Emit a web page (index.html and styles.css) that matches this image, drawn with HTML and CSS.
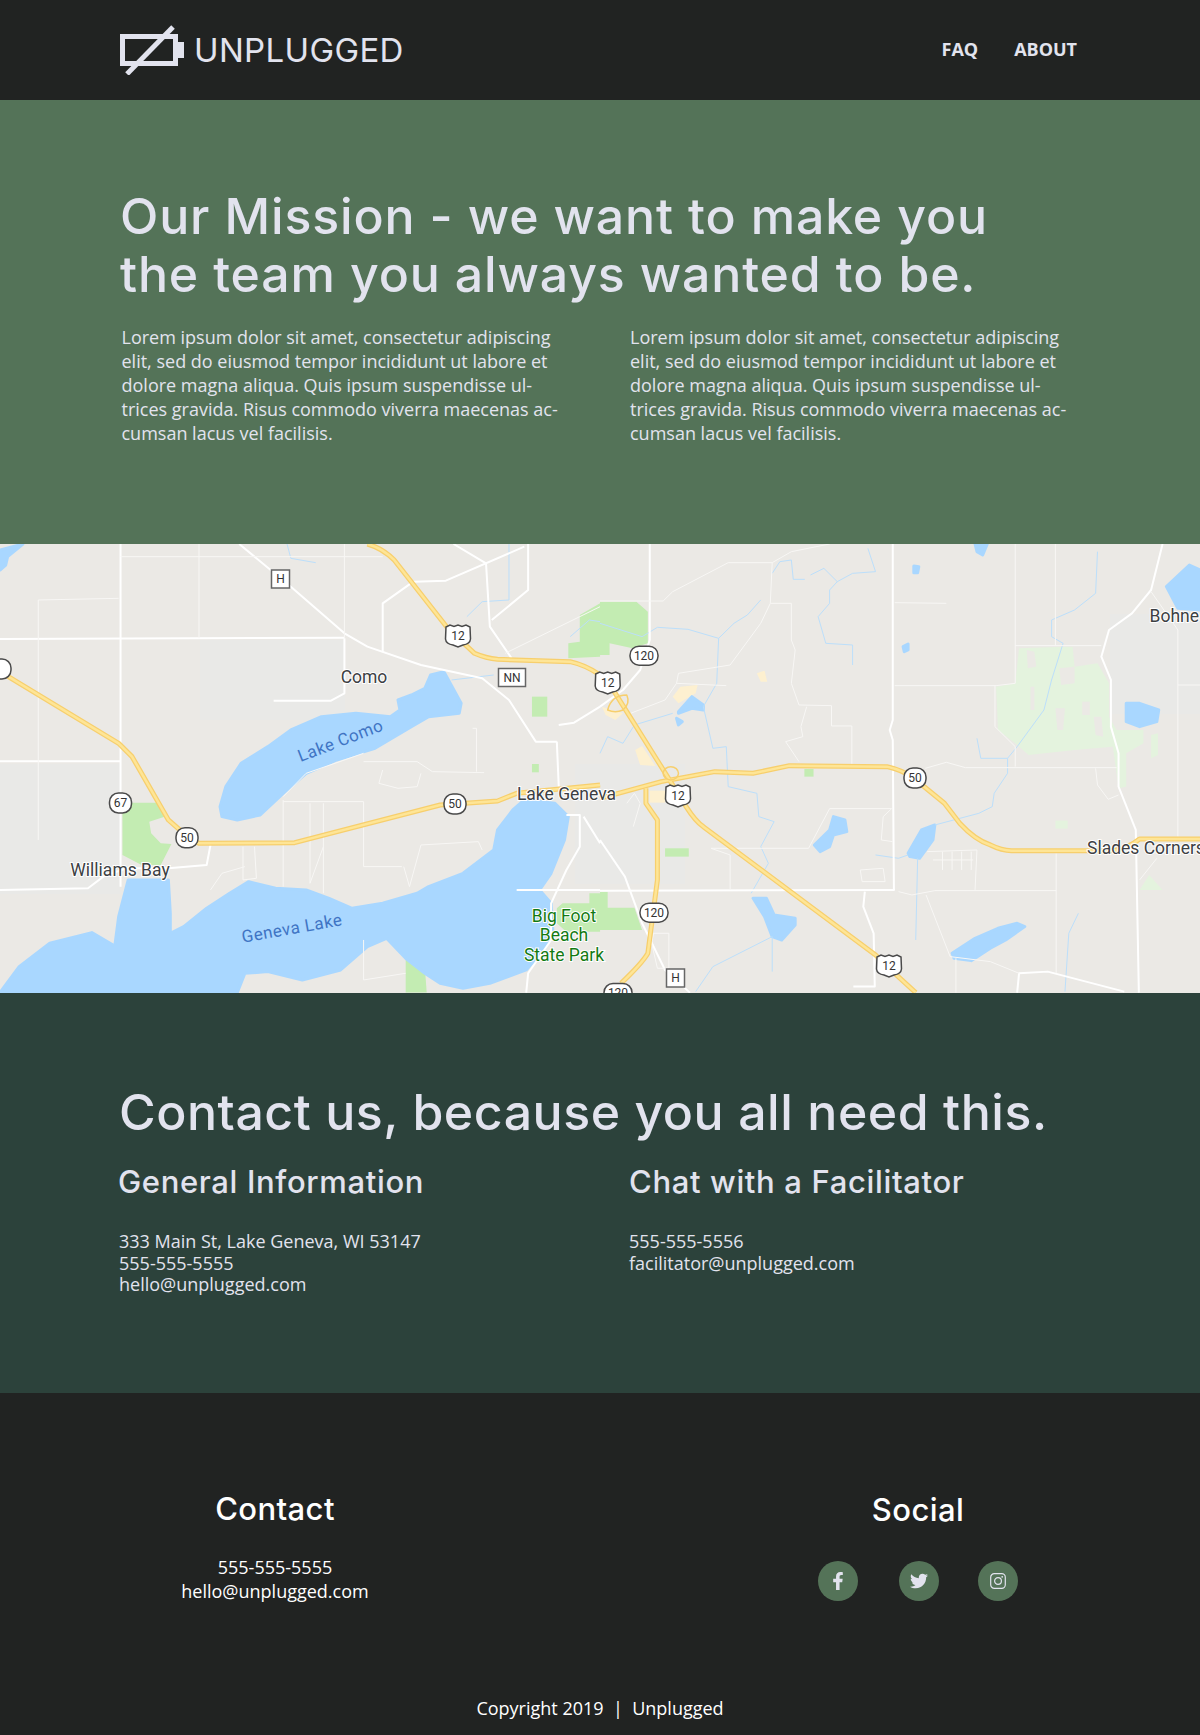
FILE: index.html
```html
<!DOCTYPE html>
<html lang="en">
<head>
    <meta charset="UTF-8">
    <meta name="viewport" content="width=device-width, initial-scale=1.0">
    <title>Unplugged</title>
    <link rel="stylesheet" href="styles.css">
</head>
<body>
    <header class="site-header">
        <a class="logo" href="#">
            <svg class="logo-icon" viewBox="0 0 66 50" width="66" height="50">
                <rect x="2.5" y="11.5" width="53" height="27" fill="none" stroke="#e2e3ee" stroke-width="5"/>
                <rect x="58" y="17" width="6" height="16" fill="#e2e3ee"/>
                <path d="M53 2 L7 49" fill="none" stroke="#e2e3ee" stroke-width="5"/>
            </svg>
            <span class="logo-text">UNPLUGGED</span>
        </a>
        <nav class="site-nav">
            <a href="#">FAQ</a>
            <a href="#">ABOUT</a>
        </nav>
    </header>

    <section class="mission">
        <h1>Our Mission - we want to make you<br>the team you always wanted to be.</h1>
        <div class="two-col">
            <p>Lorem ipsum dolor sit amet, consectetur adipiscing<br>elit, sed do eiusmod tempor incididunt ut labore et<br>dolore magna aliqua. Quis ipsum suspendisse ul-<br>trices gravida. Risus commodo viverra maecenas ac-<br>cumsan lacus vel facilisis.</p>
            <p>Lorem ipsum dolor sit amet, consectetur adipiscing<br>elit, sed do eiusmod tempor incididunt ut labore et<br>dolore magna aliqua. Quis ipsum suspendisse ul-<br>trices gravida. Risus commodo viverra maecenas ac-<br>cumsan lacus vel facilisis.</p>
        </div>
    </section>

    <div class="map">
        <svg viewBox="0 0 1200 449" width="1200" height="449">
            <defs>
                <g id="hwy-left">
                    <path d="M0 395 L310 610 L345 650 L440 840 L490 890 L520 910 L770 908 L1150 795 L1300 783 L1350 760 L1568 735"/>
                    <path d="M960 12 Q1000 25 1030 60 L1170 265 L1240 340 Q1270 355 1300 358 L1490 365 Q1530 375 1568 405"/>
                </g>
                <g id="hwy-right">
                    <path d="M0 775 L160 725 L300 695 L400 700 L495 677 L750 680 Q790 690 820 715 L900 790 L940 850 Q980 900 1020 915 Q1050 932 1075 932 L1340 932 Q1380 925 1410 897 L1568 897"/>
                    <path d="M0 400 L40 460 L160 680 L225 800 Q250 845 270 860 L720 1245 L760 1290 L825 1358"/>
                    <path d="M120 745 L120 790 L150 840 L150 1020 L125 1240 Q110 1270 55 1330"/>
                </g>
                <g id="badge-round">
                    <rect x="-11" y="-10" width="22" height="20" rx="9" class="badge-box"/>
                </g>
                <g id="badge-wide">
                    <rect x="-14" y="-9.5" width="28" height="19" rx="9" class="badge-box"/>
                </g>
                <g id="badge-shield">
                    <path class="badge-box" d="M-12 -9 L-8 -11 L-4 -9.5 L0 -11 L4 -9.5 L8 -11 L12 -9 L12.5 3 Q12 8 5 9 L0 11 L-5 9 Q-12 8 -12.5 3 Z"/>
                </g>
            </defs>

            <rect class="land" width="1200" height="449"/>
            <rect class="urban" x="0" y="220" width="120" height="130"/>
            <rect class="urban" x="200" y="96" width="145" height="80"/>
            <rect class="urban" x="1110" y="70" width="90" height="100"/>
            <rect class="urban" x="575" y="220" width="110" height="120"/>

            <g transform="translate(0,-4) scale(.3827,.3333)">
                <path class="park" d="M320 788 L420 788 L430 830 L390 845 L395 880 L420 910 L448 912 L420 975 L370 975 L320 945 Z"/>
                <path class="park" d="M1455 1105 L1470 1090 L1540 1090 L1540 1060 L1568 1060 L1568 1175 L1480 1175 L1455 1150 Z"/>
                <path class="park" d="M1568 190 L1515 225 L1515 305 L1485 310 L1485 355 L1568 350 Z"/>
                <path class="park" d="M1060 1255 L1110 1280 L1115 1358 L1060 1358 Z"/>
                <path class="park" d="M1390 470 L1430 470 L1430 530 L1390 530 Z"/>
                <path class="park" d="M1390 672 L1408 672 L1408 697 L1390 697 Z"/>

                <path class="water" d="M0 1358 L50 1280 L130 1210 L240 1178 L300 1218 L310 1130 L335 1020 L440 1020 L445 1120 L445 1180 L480 1160 L540 1105 L600 1060 L650 1025 L720 1045 L800 1050 L860 1075 L920 1105 L1000 1090 L1090 1060 L1120 1040 L1210 1000 L1290 930 L1300 870 L1340 810 L1370 780 L1450 790 L1485 830 L1475 900 L1440 1000 L1410 1050 L1440 1090 L1445 1180 L1420 1230 L1375 1290 L1280 1330 L1210 1345 L1150 1330 L1110 1300 L1060 1255 L1010 1195 L960 1220 L890 1290 L790 1320 L700 1295 L640 1300 L620 1358 Z"/>
                <path class="water" d="M575 800 L590 740 L630 670 L700 620 L760 570 L840 530 L930 520 L1020 530 L1045 510 L1040 480 L1075 465 L1110 445 L1125 405 L1160 395 L1205 490 L1200 520 L1120 530 L1075 560 L980 625 L880 660 L800 700 L740 760 L680 825 L620 840 L580 830 Z"/>
                <path class="water" d="M0 30 L60 12 L20 50 L15 75 L0 90 Z"/>

                <path class="river" d="M750 12 L760 55 L825 68"/>
                <path class="river" d="M1180 420 L1290 405"/>
                <path class="river" d="M1220 230 L1260 185 L1330 180 L1330 12"/>
                <path class="river" d="M1490 290 L1540 240 L1568 245"/>

                <path class="road" d="M315 12 L315 1040"/>
                <path class="road" d="M0 297 L900 293"/>
                <path class="road" d="M625 12 L760 140 L900 280 L960 320 L1100 375 L1260 415 L1330 480 L1400 605 L1455 605"/>
                <path class="road" d="M0 1050 L230 1045 L270 1010 L330 985 L440 985 L540 975 L550 915"/>
                <path class="road" d="M0 664 L315 664"/>
                <path class="road" d="M900 295 L900 460 L865 482 L715 482"/>
                <path class="road" d="M1000 335 L1000 190 L1080 125 L1165 122 L1370 20"/>
                <path class="road" d="M1185 12 L1270 70 L1280 260 L1340 360"/>
                <path class="road" d="M1380 12 L1380 150 L1285 240"/>
                <path class="road" d="M1455 605 L1460 740"/>
                <path class="road" d="M1460 555 L1500 548 L1568 500"/>
                <path class="road" d="M1480 825 L1515 825 L1515 920 L1480 990 L1440 1090 L1440 1200 L1380 1300 L1375 1358"/>
                <path class="road" d="M1525 830 L1568 910"/>
                <path class="road" d="M1350 1050 L1568 1050"/>

                <path class="road-thin" d="M100 180 L310 175"/>
                <path class="road-thin" d="M100 180 L100 900"/>
                <path class="road-thin" d="M315 50 L1000 50"/>
                <path class="road-thin" d="M520 12 L520 295"/>
                <path class="road-thin" d="M900 12 L900 295"/>
                <path class="road-thin" d="M1320 340 L1568 200"/>
                <path class="road-thin" d="M740 780 L740 1040"/>
                <path class="road-thin" d="M740 785 L950 785 L950 980 L1050 980"/>
                <path class="road-thin" d="M950 640 L800 700 L740 770"/>
                <path class="road-thin" d="M950 665 L1090 665 L1130 695 L1265 698"/>
                <path class="road-thin" d="M1000 690 L990 730 L1040 745 L1090 740 L1100 700"/>
                <path class="road-thin" d="M845 790 L845 1060"/>
                <path class="road-thin" d="M810 790 L810 1030 L845 920"/>
                <path class="road-thin" d="M1055 980 L1070 1040 L1100 915 L1250 905 L1260 930"/>
                <path class="road-thin" d="M635 920 L635 1020 L670 1015 L665 920"/>
                <path class="road-thin" d="M550 1050 L580 1000 L640 980"/>
                <path class="road-thin" d="M1235 565 L1245 565 L1245 695"/>
                <path class="road-thin" d="M950 1200 L950 1320 L1060 1300"/>

                <use href="#hwy-left" class="hwy-out"/>
                <use href="#hwy-left" class="hwy-in"/>
            </g>

            <g transform="translate(600,-4) scale(.3827,.3333)">
                <path class="forest" d="M1095 325 L1210 320 L1235 320 L1240 380 L1300 370 L1330 430 L1330 530 L1350 570 L1420 570 L1420 610 L1375 640 L1375 740 L1355 745 L1340 620 L1240 630 L1120 645 L1085 610 L1040 570 L1035 440 L1085 430 Z"/>
                <path class="forest" d="M1440 585 L1458 580 L1458 645 L1440 655 Z"/>
                <path class="forest" d="M1410 1050 L1435 1005 L1470 1050 Z"/>
                <path class="land" d="M1115 330 L1135 335 L1140 380 L1118 385 Z"/>
                <path class="land" d="M1200 385 L1240 380 L1240 430 L1205 435 Z"/>
                <path class="land" d="M1125 440 L1135 440 L1135 510 L1125 510 Z"/>
                <path class="land" d="M1190 505 L1215 505 L1210 570 L1195 570 Z"/>
                <path class="land" d="M1260 485 L1280 485 L1280 525 L1260 525 Z"/>
                <path class="land" d="M1290 530 L1310 530 L1315 590 L1295 585 Z"/>
                <path class="park" d="M0 185 L95 185 L125 215 L125 310 L85 325 L25 310 L25 345 L0 345 Z"/>
                <path class="park" d="M0 1055 L20 1055 L20 1103 L90 1103 L110 1170 L0 1170 Z"/>
                <path class="park" d="M170 925 L232 925 L232 950 L170 950 Z"/>
                <path class="park" d="M534 687 L558 687 L558 710 L534 710 Z"/>
                <path class="forest" d="M1190 842 L1222 842 L1222 866 L1190 866 Z"/>

                <path class="sand" d="M190 470 L210 440 L255 435 L250 460 L205 490 Z"/>
                <path class="sand" d="M410 400 L430 392 L437 425 L420 425 Z"/>
                <path class="sand" d="M92 630 L110 618 L145 678 L105 675 Z"/>
                <path class="sand" d="M5 500 L30 510 L60 520 L40 540 L15 525 Z"/>
                <path class="sand" d="M130 752 L170 752 L170 788 L130 788 Z"/>

                <path class="water" d="M1540 75 L1480 140 L1510 205 L1568 210 L1568 90 Z"/>
                <path class="water" d="M1375 490 L1410 490 L1460 510 L1455 545 L1410 560 L1375 545 Z"/>
                <path class="water" d="M805 940 L840 870 L875 855 L870 900 L835 955 L810 950 Z"/>
                <path class="water" d="M560 915 L600 870 L610 830 L640 840 L645 875 L610 885 L600 920 L575 935 Z"/>
                <path class="water" d="M400 1075 L435 1075 L455 1125 L510 1135 L510 1155 L475 1200 L450 1190 L430 1130 Z"/>
                <path class="water" d="M920 1240 L980 1195 L1040 1165 L1090 1150 L1110 1160 L1060 1200 L1020 1225 L970 1262 L925 1255 Z"/>
                <path class="water" d="M205 515 L240 470 L270 495 L270 510 L240 505 L205 520 Z"/>
                <path class="water" d="M980 12 L1012 12 L1000 45 L985 35 Z"/>
                <path class="water" d="M820 78 L833 80 L830 98 L820 98 Z"/>
                <path class="water" d="M792 320 L805 312 L805 330 L795 335 Z"/>
                <path class="water" d="M200 535 L215 545 L205 555 Z"/>

                <path class="river" d="M0 250 L110 290 L150 262 L230 268 L310 295 L305 430 L270 500 L295 625 L330 620 L335 740 L410 760 L415 830 L455 845 L420 920 L440 970 L395 1060"/>
                <path class="river" d="M310 295 L350 250 L385 225 L420 180"/>
                <path class="river" d="M450 100 L470 65 L500 60 L505 118 L535 118"/>
                <path class="river" d="M550 105 L585 85 L620 125 L660 100 L720 95 L700 25"/>
                <path class="river" d="M620 125 L600 150 L600 190 L570 230 L590 310 L660 315 L660 375"/>
                <path class="river" d="M1300 35 L1295 160 L1240 210 L1180 240 L1180 290 L1210 310 L1180 420 L1160 510 L1090 620 L1065 655 L995 655 L985 595"/>
                <path class="river" d="M1065 655 L1065 700 L1030 760 L1025 800 L990 820 L875 855"/>
                <path class="river" d="M720 945 L780 955 L805 945"/>
                <path class="river" d="M830 955 L825 1200"/>
                <path class="river" d="M450 1190 L295 1280 L250 1355"/>
                <path class="river" d="M450 1190 L450 1295"/>
                <path class="river" d="M1250 1120 L1225 1180 L1215 1355"/>
                <path class="river" d="M0 640 L20 590 L60 610 L90 555 L190 520"/>

                <path class="road" d="M130 12 L130 300 L105 390 L60 450 L0 500"/>
                <path class="road" d="M765 12 L765 540 L757 570 L765 600 L768 1050"/>
                <path class="road" d="M0 1052 L770 1050"/>
                <path class="road" d="M1470 12 L1440 150 L1390 220 L1330 270 L1310 350 L1335 420 L1335 560 L1355 640 L1355 740 L1400 870 L1408 1358"/>
                <path class="road" d="M0 900 L65 1010 L110 1150 L170 1290 L235 1358"/>
                <path class="road" d="M692 1055 L688 1100 L715 1180 L718 1340 L662 1340"/>
                <path class="road" d="M1090 1358 L1095 1300 L1170 1295 L1370 1355"/>

                <path class="road-thin" d="M0 183 L165 183 L190 155 L335 68 L450 68 L500 35 L600 12"/>
                <path class="road-thin" d="M445 190 L500 190 L500 300 L510 330 L500 430 L520 495 L605 497 L605 558 L658 558 L658 680"/>
                <path class="road-thin" d="M445 190 L420 250 L340 375 L205 400 L200 430 L330 437"/>
                <path class="road-thin" d="M450 68 L445 190"/>
                <path class="road-thin" d="M200 430 L170 480 L80 520"/>
                <path class="road-thin" d="M540 500 L525 560 L530 590 L485 605 L520 665"/>
                <path class="road-thin" d="M770 188 L905 190"/>
                <path class="road-thin" d="M770 437 L1035 437 L1085 430 L1085 12"/>
                <path class="road-thin" d="M1085 317 L1310 317"/>
                <path class="road-thin" d="M1190 12 L1190 317"/>
                <path class="road-thin" d="M1032 437 L1032 560 L1085 620 L1085 680"/>
                <path class="road-thin" d="M850 685 L905 667 L955 683 L1350 683"/>
                <path class="road-thin" d="M1295 685 L1300 735 L1328 778 L1355 765"/>
                <path class="road-thin" d="M600 806 L762 806 L740 830 L735 900 L765 905"/>
                <path class="road-thin" d="M600 806 L545 925 L290 925 L340 945 L340 1050"/>
                <path class="road-thin" d="M680 990 L740 985 L745 1025 L685 1025 Z"/>
                <path class="road-thin" d="M855 935 L985 930 L980 1050"/>
                <path class="road-thin" d="M870 960 L975 960"/>
                <path class="road-thin" d="M895 935 L895 990 M920 935 L920 990 M945 935 L945 990 M970 935 L970 990"/>
                <path class="road-thin" d="M780 1055 L815 1065 L875 1052 L1192 1052"/>
                <path class="road-thin" d="M1192 940 L1192 1300"/>
                <path class="road-thin" d="M852 1065 L915 1250 L1020 1265 L1095 1300"/>
                <path class="road-thin" d="M930 1255 L930 1358"/>
                <path class="road-thin" d="M1410 1020 L1455 955"/>
                <path class="road-thin" d="M1510 270 L1510 890"/>
                <path class="road-thin" d="M1440 155 L1510 270"/>
                <path class="road-thin" d="M1510 435 L1568 435"/>
                <path class="road-thin" d="M140 1180 L180 1180 L180 1285 L150 1285 L135 1210 Z"/>
                <path class="road-thin" d="M70 790 L90 760 L105 790 L87 860"/>

                <use href="#hwy-right" class="hwy-out"/>
                <use href="#hwy-right" class="hwy-in"/>
                <circle class="ramp" cx="185" cy="700" r="20"/>
                <path class="ramp" d="M20 510 Q30 465 70 465 Q80 490 60 510 Q40 520 20 510 Z"/>
            </g>

            <use href="#badge-round" x="0" y="125"/>
            <use href="#badge-round" x="120.5" y="259"/>
            <use href="#badge-round" x="187" y="293.7"/>
            <use href="#badge-round" x="455" y="260"/>
            <use href="#badge-round" x="915" y="234"/>
            <use href="#badge-wide" x="644" y="111.7"/>
            <use href="#badge-wide" x="654" y="368.7"/>
            <use href="#badge-wide" x="618" y="449"/>
            <use href="#badge-shield" x="458" y="92"/>
            <use href="#badge-shield" x="607.7" y="139"/>
            <use href="#badge-shield" x="678" y="252"/>
            <use href="#badge-shield" x="889" y="422"/>
            <rect class="badge-square" x="271.5" y="26" width="18" height="18"/>
            <rect class="badge-square" x="498.5" y="124.5" width="27" height="18"/>
            <rect class="badge-square" x="666.5" y="425" width="18" height="18"/>

            <g class="badge-text">
                <text x="120.5" y="263">67</text>
                <text x="187" y="298">50</text>
                <text x="455" y="264">50</text>
                <text x="915" y="238">50</text>
                <text x="644" y="116">120</text>
                <text x="654" y="373">120</text>
                <text x="618" y="453">120</text>
                <text x="458" y="96">12</text>
                <text x="607.7" y="143">12</text>
                <text x="678" y="256">12</text>
                <text x="889" y="426">12</text>
                <text x="280.5" y="39">H</text>
                <text x="512" y="137.5">NN</text>
                <text x="675.5" y="438">H</text>
            </g>

            <g class="label-place">
                <text x="364" y="139">Como</text>
                <text x="120" y="332">Williams Bay</text>
                <text x="566.5" y="256">Lake Geneva</text>
                <text class="start" x="1087" y="310">Slades Corners</text>
                <text class="start" x="1149.5" y="78">Bohne</text>
            </g>
            <g class="label-water">
                <text transform="translate(342.5,202) rotate(-21)">Lake Como</text>
                <text transform="translate(293,390) rotate(-10)">Geneva Lake</text>
            </g>
            <g class="label-park">
                <text x="564" y="378">Big Foot</text>
                <text x="564" y="397">Beach</text>
                <text x="564" y="417">State Park</text>
            </g>
        </svg>
    </div>

    <section class="contact">
        <h2>Contact us, because you all need this.</h2>
        <div class="contact-cols">
            <div class="contact-general">
                <h3>General Information</h3>
                <p>333 Main St, Lake Geneva, WI 53147<br>555-555-5555<br>hello@unplugged.com</p>
            </div>
            <div>
                <h3>Chat with a Facilitator</h3>
                <p>555-555-5556<br>facilitator@unplugged.com</p>
            </div>
        </div>
    </section>

    <footer class="site-footer">
        <div class="footer-cols">
            <div class="footer-contact">
                <h4>Contact</h4>
                <p>555-555-5555<br>hello@unplugged.com</p>
            </div>
            <div class="footer-social">
                <h4>Social</h4>
                <div class="social-links">
                    <a href="#">
                        <svg viewBox="0 0 320 512" width="12" height="18"><path d="M279.14 288l14.22-92.66h-88.91v-60.13c0-25.35 12.42-50.06 52.24-50.06h40.42V6.26S260.43 0 225.36 0c-73.22 0-121.08 44.38-121.08 124.72v70.62H22.89V288h81.39v224h100.17V288z"/></svg>
                    </a>
                    <a href="#">
                        <svg viewBox="0 0 512 512" width="18" height="18"><path d="M459.37 151.716c.325 4.548.325 9.097.325 13.645 0 138.72-105.583 298.558-298.558 298.558-59.452 0-114.68-17.219-161.137-47.106 8.447.974 16.568 1.299 25.34 1.299 49.055 0 94.213-16.568 130.274-44.832-46.132-.975-84.792-31.188-98.112-72.772 6.498.974 12.995 1.624 19.818 1.624 9.421 0 18.843-1.3 27.614-3.573-48.081-9.747-84.143-51.98-84.143-102.985v-1.299c13.969 7.797 30.214 12.67 47.431 13.319-28.264-18.843-46.781-51.005-46.781-87.391 0-19.492 5.197-37.36 14.294-52.954 51.655 63.675 129.3 105.258 216.365 109.807-1.624-7.797-2.599-15.918-2.599-24.04 0-57.828 46.782-104.934 104.934-104.934 30.213 0 57.502 12.67 76.67 33.137 23.715-4.548 46.456-13.32 66.599-25.34-7.798 24.366-24.366 44.833-46.132 57.827 21.117-2.273 41.584-8.122 60.426-16.243-14.292 20.791-32.161 39.308-52.628 54.253z"/></svg>
                    </a>
                    <a href="#">
                        <svg class="insta" viewBox="0 0 16 16" width="16" height="16"><rect x=".7" y=".7" width="14.6" height="14.6" rx="3.6"/><circle cx="8" cy="8" r="3.4"/><circle class="dot" cx="12.2" cy="3.8" r=".9"/></svg>
                    </a>
                </div>
            </div>
        </div>
        <p class="copyright">Copyright 2019 &nbsp;|&nbsp; Unplugged</p>
    </footer>
</body>
</html>
```

FILE: styles.css
```css
* {
    box-sizing: border-box;
}

body {
    margin: 0;
    font-family: "Open Sans", Arial, sans-serif;
    font-size: 18px;
    color: #e2e3ee;
    background-color: #212322;
}

a {
    color: inherit;
    text-decoration: none;
}

h1, h2, h3, h4, p {
    margin: 0;
}

h1, h2, h3, h4, .logo-text {
    font-family: Inter, "Open Sans", sans-serif;
}

/* header */
.site-header {
    height: 100px;
    padding: 0 123px 2px 120px;
    display: flex;
    align-items: center;
    justify-content: space-between;
    background-color: #212322;
}

.logo {
    display: flex;
    align-items: center;
    gap: 8px;
    margin-top: 2px;
}

.logo-text {
    font-size: 33px;
    font-weight: 400;
    letter-spacing: .35px;
}

.site-nav {
    display: flex;
    gap: 36px;
    font-weight: 700;
}

/* mission */
.mission {
    height: 444px;
    padding: 88px 120px 0;
    background-color: #547358;
}

.mission h1 {
    font-size: 50px;
    line-height: 57.6px;
    font-weight: 500;
    letter-spacing: .85px;
}

.two-col {
    margin-top: 22px;
    padding-left: 1.5px;
    display: grid;
    grid-template-columns: 508.5px 1fr;
    line-height: 24px;
}

/* map */
.map {
    height: 449px;
    overflow: hidden;
}

.map svg {
    display: block;
}

.map path, .map circle {
    vector-effect: non-scaling-stroke;
}

.land { fill: #ebe9e5; }
.urban { fill: #e9e9e7; }
.park { fill: #c3ecb2; }
.forest { fill: #e4f3de; }
.sand { fill: #fdf0d0; }

.water {
    fill: #a9d7ff;
    stroke: #a9d7ff;
    stroke-width: 3;
    stroke-linejoin: round;
}

.road, .road-thin, .river, .ramp, .hwy-out, .hwy-in {
    fill: none;
    stroke-linejoin: round;
}

.road { stroke: #fff; stroke-width: 2; }
.road-thin { stroke: #f8f7f5; stroke-width: 1; }
.river { stroke: #bcdffb; stroke-width: 1; }
.hwy-out { stroke: #f7cf6d; stroke-width: 5; }
.hwy-in { stroke: #fee596; stroke-width: 2.5; }
.ramp { stroke: #f7cf6d; stroke-width: 1.5; }

.badge-box {
    fill: #fff;
    stroke: #4a4a4a;
    stroke-width: 1.5;
}

.badge-square {
    fill: #fff;
    stroke: #666;
    stroke-width: 1.5;
}

.badge-text text {
    font-family: Roboto, sans-serif;
    font-size: 12px;
    fill: #333;
    text-anchor: middle;
}

.label-place text, .label-water text, .label-park text {
    font-family: Roboto, sans-serif;
    font-size: 17.5px;
    text-anchor: middle;
    paint-order: stroke;
    stroke-width: 2px;
}

.label-place text {
    fill: #3c4043;
    stroke: #fff;
}

.label-place .start {
    text-anchor: start;
}

.label-water text {
    font-size: 17px;
    fill: #3f74c4;
    stroke: none;
    letter-spacing: .5px;
}

.label-park text {
    fill: #137a13;
    stroke: #fff;
}

/* contact */
.contact {
    height: 400px;
    padding: 90px 120px 0 119px;
    background-color: #2c423b;
}

.contact h2 {
    font-size: 50px;
    line-height: 58px;
    font-weight: 500;
    letter-spacing: .55px;
}

.contact-cols {
    margin-top: 19px;
    display: grid;
    grid-template-columns: 510px 1fr;
}

.contact-cols h3 {
    font-size: 31px;
    line-height: 44px;
    font-weight: 500;
    letter-spacing: .65px;
    margin-bottom: 27px;
}

.contact-general h3 {
    margin-left: -1px;
}

.contact-cols p {
    line-height: 21.5px;
}

/* footer */
.site-footer {
    height: 342px;
    padding-top: 94px;
    color: #fff;
    text-align: center;
}

.footer-cols {
    display: flex;
}

.footer-contact {
    width: 550px;
}

.footer-social {
    width: 300px;
    margin-left: 218px;
}

.site-footer h4 {
    font-size: 31px;
    line-height: 44px;
    font-weight: 500;
    letter-spacing: .4px;
}

.footer-social h4 {
    margin-top: 1px;
}

.footer-contact p {
    margin-top: 24px;
    line-height: 24px;
}

.social-links {
    margin-top: 29px;
    display: flex;
    justify-content: center;
    gap: 39px;
}

.social-links a {
    width: 40px;
    height: 40px;
    display: flex;
    align-items: center;
    justify-content: center;
    border-radius: 50%;
    background-color: #547358;
}

.social-links a:first-child {
    margin-right: 2px;
}

.social-links svg {
    fill: #e2e3ee;
}

.insta {
    stroke: #e2e3ee;
    stroke-width: 1.2;
}

.social-links .insta {
    fill: none;
}

.insta .dot {
    fill: #e2e3ee;
    stroke: none;
}

.copyright {
    margin-top: 93px;
    line-height: 24px;
}
```
